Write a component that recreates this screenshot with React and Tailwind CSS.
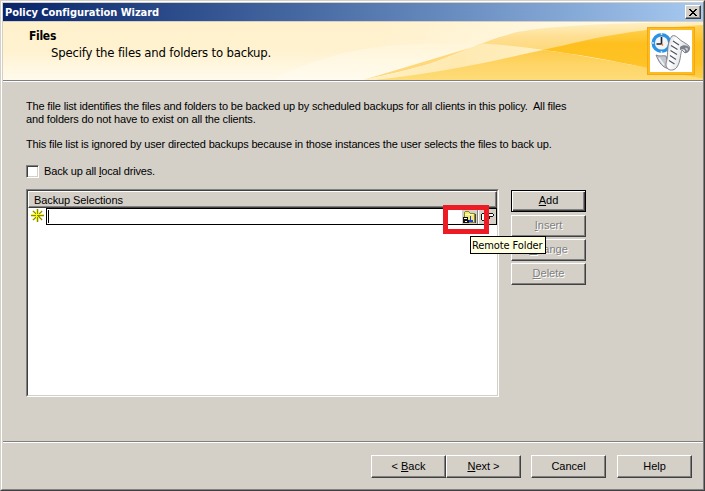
import clsx from 'clsx'

const uiFont = "font-['Liberation_Sans',Arial,sans-serif] tracking-[-0.16px]"
const tahoma = "font-['DejaVu_Sans_Condensed','DejaVu_Sans',sans-serif] [font-stretch:condensed]"

function Button({ children, className, disabled, isDefault }) {
  return (
    <button
      disabled={disabled}
      className={clsx(
        'flex items-center justify-center w-[75px] bg-[#d4d0c8] border text-[11px] leading-[13px] tracking-normal whitespace-pre',
        isDefault ? 'border-black' : 'border-t-white border-l-white border-r-[#404040] border-b-[#404040]',
        isDefault
          ? 'shadow-[inset_1px_1px_0_#fff,inset_-1px_-1px_0_#404040,inset_-2px_-2px_0_#808080]'
          : 'shadow-[inset_-1px_-1px_0_#808080]',
        disabled ? 'text-[#808080] [text-shadow:1px_1px_0_#fff]' : 'text-black',
        className
      )}
    >
      {children}
    </button>
  )
}

function Banner() {
  return (
    <svg className="absolute inset-0" width="700" height="58" viewBox="3 22 700 58">
      <defs>
        <linearGradient id="cream" x1="0" y1="0" x2="0" y2="1">
          <stop offset="0" stopColor="#fff1cc" />
          <stop offset="0.5" stopColor="#fff2d0" />
          <stop offset="1" stopColor="#fffaec" />
        </linearGradient>
        <linearGradient id="topFade" gradientUnits="userSpaceOnUse" x1="380" y1="0" x2="620" y2="0">
          <stop offset="0" stopColor="#fff8e2" stopOpacity="0" />
          <stop offset="1" stopColor="#fffae8" />
        </linearGradient>
        <linearGradient id="pale" gradientUnits="userSpaceOnUse" x1="300" y1="44" x2="300" y2="80">
          <stop offset="0" stopColor="#fff5d9" />
          <stop offset="1" stopColor="#fffbee" />
        </linearGradient>
        <linearGradient id="mid" gradientUnits="userSpaceOnUse" x1="0" y1="22" x2="0" y2="50">
          <stop offset="0" stopColor="#fff0c4" />
          <stop offset="0.5" stopColor="#fee095" />
          <stop offset="1" stopColor="#fed87a" />
        </linearGradient>
        <linearGradient id="swath" gradientUnits="userSpaceOnUse" x1="370" y1="0" x2="543" y2="0">
          <stop offset="0" stopColor="#fff0c4" />
          <stop offset="0.5" stopColor="#fee9b0" />
          <stop offset="1" stopColor="#ffefc2" />
        </linearGradient>
        <linearGradient id="deep" gradientUnits="userSpaceOnUse" x1="0" y1="50" x2="0" y2="80">
          <stop offset="0" stopColor="#fecb4a" />
          <stop offset="0.5" stopColor="#fed567" />
          <stop offset="1" stopColor="#fedc79" />
        </linearGradient>
        <linearGradient id="bright" gradientUnits="userSpaceOnUse" x1="0" y1="24" x2="0" y2="80">
          <stop offset="0" stopColor="#ffd560" />
          <stop offset="0.35" stopColor="#fdc01e" />
          <stop offset="0.7" stopColor="#fec225" />
          <stop offset="1" stopColor="#fed050" />
        </linearGradient>
      </defs>
      <rect x="3" y="22" width="700" height="58" fill="url(#cream)" />
      <rect x="380" y="22" width="323" height="58" fill="url(#topFade)" />
      <path d="M270 80C300 66 320 59 340 54C375 46 400 44 440 44L483 44L470 80Z" fill="url(#pale)" />
      <path d="M363 80C400 72 425 66 440 60C460 52 470 48 483 43C495 38 500 37 513 33C535 28 580 23 703 22V60L543 50L483 44Z" fill="url(#mid)" />
      <path d="M363 80C400 72 425 66 440 60C460 52 470 48 483 43.500C505 45 525 47 543 50L457 70L383 80Z" fill="url(#swath)" />
      <path d="M375 80C410 76 435 72 457 68C490 62 515 56 543 50C580 55 620 62 703 79V80Z" fill="url(#deep)" />
      <path d="M543 50C565 45 590 39 607 36C640 30 670 27 703 25V79C684 75 664 72 647 68C610 60 575 54 543 50Z" fill="url(#bright)" />
    </svg>
  )
}

function PolicyIcon() {
  return (
    <div className="relative flex items-center justify-center w-12 h-12 mr-2 bg-white border-[3px] border-[#fdbb20] outline outline-1 -outline-offset-1 outline-[#f4a914]">
      <svg className="shrink-0" width="42" height="42" viewBox="0 0 42 42">
        <defs>
          <linearGradient id="paper" x1="0" y1="0" x2="1" y2="0.4">
            <stop offset="0" stopColor="#c9ccd2" />
            <stop offset="0.4" stopColor="#ffffff" />
            <stop offset="1" stopColor="#d3d6dc" />
          </linearGradient>
        </defs>
        <circle cx="11.500" cy="13" r="8.300" fill="#f1f4f8" stroke="#2b93e4" strokeWidth="3.400" />
        <path d="M11.500 3V5M2 13H4M11.500 21V23M19 13H21" stroke="#cfe6fa" strokeWidth="1.500" />
        <path d="M11.500 7V14H6.500" fill="none" stroke="#222" strokeWidth="1.600" />
        <path d="M11.500 14L13 15.500" stroke="#f08030" strokeWidth="1.500" />
        <path d="M6 25C10 27 13 25 16 26L20 39C12 38 9 32 6 25Z" fill="#c3c6cc" stroke="#777b84" strokeWidth="0.900" />
        <path d="M9 28L14 35" stroke="#f1f2f4" strokeWidth="1.500" />
        <path d="M22 6C24 5 26 6 28 8C32 12 36 13 39 16C41 19 38 22 35 23L32 20C30 24 31 31 27 37C25 40 21 41 18 39C15 36 16 33 17 29C18 21 17 12 22 6Z" fill="url(#paper)" stroke="#777b84" strokeWidth="0.900" />
        <path d="M30 17C33 14 38 15 39.500 18C40 22 37 23 35 23C36 20 34 18 30 20Z" fill="#7b8089" />
        <path d="M35 18C37 17 39 19 37 21Z" fill="#d0d3d9" />
        <path d="M23 11L29 15M21 15.500L27.500 19.500M20.500 20.500L27 24.500M20 25.500L26 29.500M19 30.500L24.500 34" stroke="#4d525c" strokeWidth="1.100" />
      </svg>
    </div>
  )
}

function FolderIcon() {
  return (
    <svg width="15" height="15" viewBox="0 0 15 15" shapeRendering="crispEdges">
      <path d="M3 2H7V3H8V4H13V14H2V3H3Z" fill="#8b8630" />
      <path d="M3 3H7V4H8V5H12V13H3Z" fill="#f3ea70" />
      <path d="M3 5H11V6H3Z" fill="#fffcc4" />
      <path d="M13 5H14V14H13Z" fill="#404040" />
      <path d="M1 8H6V11H7V14H1Z" fill="#111" />
      <path d="M2 9H5V10H2ZM3 12H5V13H3Z" fill="#fff" />
      <path d="M8 7H9V11H11V13H7V11H8Z" fill="#1c39e4" />
    </svg>
  )
}

function HandIcon() {
  return (
    <svg width="16" height="15" viewBox="0 0 16 15" shapeRendering="crispEdges">
      <path d="M3 5H7V4H9V5H14V7H10V10H9V11H3Z" fill="#fff" />
      <path d="M2 5H3V11H2ZM3 4H6V5H3ZM6 3H9V4H6ZM9 4H14V5H9ZM14 5H15V7H14ZM9 7H14V8H9ZM7 6H9V7H7ZM10 8H11V10H10ZM7 9H10V10H7ZM3 11H9V12H3ZM9 10H10V11H9Z" fill="#111" />
    </svg>
  )
}

export default function App() {
  return (
    <div className={clsx('relative flex flex-col w-[705px] h-[491px] bg-[#d4d0c8] text-black overflow-hidden cursor-default border border-t-[#d4d0c8] border-l-[#d4d0c8] border-r-[#404040] border-b-[#404040]', uiFont)}>
      <div className="flex flex-col grow border border-t-white border-l-white border-r-[#808080] border-b-[#808080] pt-px pl-px">
        {/* Title bar */}
        <div className="flex items-center justify-between h-[18px] pl-[2px] pr-[2px] bg-linear-to-r from-[#0a246a] to-[#a6caf0]">
          <h1 className={clsx('pt-px text-[11px] leading-[17px] tracking-[-0.04px] font-bold text-white whitespace-pre', tahoma)}>Policy Configuration Wizard</h1>
          <button className="flex items-center justify-center w-4 h-[14px] bg-[#d4d0c8] border border-t-white border-l-white border-r-[#404040] border-b-[#404040] shadow-[inset_-1px_-1px_0_#808080]">
            <svg width="8" height="7" viewBox="0 0 8 7" shapeRendering="crispEdges">
              <path d="M0 0h2v1h1v1h2v-1h1v-1h2v1h-1v1h-1v1h-1v1h1v1h1v1h1v1h-2v-1h-1v-1h-2v1h-1v1h-2v-1h1v-1h1v-1h1v-1h-1v-1h-1v-1h-1z" />
            </svg>
          </button>
        </div>

        {/* Header */}
        <div className="relative h-[60px] mt-px border-b border-white">
          <Banner />
          <div className="relative flex justify-between h-[59px] border-b border-[#808080] pt-[5px]">
            <div className={clsx('pl-[26px] pt-px whitespace-pre', tahoma)}>
              <h2 className="text-[12px] leading-[17px] font-bold tracking-[-0.3px]">Files</h2>
              <p className="pl-[22px] text-[13px] leading-4 tracking-[-0.19px]">Specify the files and folders to backup.</p>
            </div>
            <PolicyIcon />
          </div>
        </div>

        {/* Content */}
        <div className="flex flex-col grow pl-[23px] pt-[18px] text-[11px] leading-[13px] whitespace-pre">
          <p>The file list identifies the files and folders to be backed up by scheduled backups for all clients in this policy.  All files</p>
          <p>and folders do not have to exist on all the clients.</p>
          <p className="mt-3">This file list is ignored by user directed backups because in those instances the user selects the files to back up.</p>
          <label className="flex items-center gap-[5px] mt-[14px]">
            <span className="w-[13px] h-[13px] bg-white border border-t-[#808080] border-l-[#808080] border-r-white border-b-white shadow-[inset_1px_1px_0_#404040,inset_-1px_-1px_0_#d4d0c8]" />
            <span>Back up all <u>l</u>ocal drives.</span>
          </label>

          <div className="flex gap-3 mt-[11px]">
            {/* Selection list */}
            <div className="w-[473px] h-[208px] bg-white border border-t-[#808080] border-l-[#808080] border-r-white border-b-white">
              <div className="h-full border border-t-[#404040] border-l-[#404040] border-r-[#d4d0c8] border-b-[#d4d0c8]">
                <div className="h-[17px] pl-[5px] bg-[#d4d0c8] border border-t-white border-l-white border-r-[#404040] border-b-[#404040] shadow-[inset_-1px_-1px_0_#808080]">
                  <span className="leading-[17px] tracking-[-0.1px]">Backup Selections</span>
                </div>
                <div className="flex h-[17px]">
                  <svg className="mx-[2px]" width="14" height="16" viewBox="0 0 14 16">
                    <path d="M7.500 1V14M1 7.500H14M3 3L12 12M12 3L3 12" stroke="#8a8a00" strokeWidth="1.500" />
                    <path d="M6.500 2V13M1 6.500H13M2.500 3.500L11 12M11 3L3 11" stroke="#ffff00" strokeWidth="0.900" />
                  </svg>
                  <div className="flex items-center grow border border-black pl-px">
                    <span className="w-px h-[13px] bg-black" />
                    <span className="grow" />
                    <span className="flex h-[15px] w-[16px] bg-[#d4d0c8] border-r border-[#808080]"><FolderIcon /></span>
                    <span className="flex h-[15px] w-[17px] ml-px bg-[#d4d0c8]"><HandIcon /></span>
                  </div>
                </div>
              </div>
            </div>
            {/* List actions */}
            <div className="flex flex-col gap-[2px] pt-px">
              <Button className="h-[22px] mb-px pb-[2px]" isDefault><u>A</u>dd</Button>
              <Button className="h-[22px] pb-px" disabled><u>I</u>nsert</Button>
              <Button className="h-[22px] pb-px" disabled><u>C</u>hange</Button>
              <Button className="h-[22px] pb-px" disabled><u>D</u>elete</Button>
            </div>
          </div>
        </div>

        {/* Footer */}
        <div className="h-[48px] border-t border-[#808080]">
          <div className="flex h-full border-t border-white pt-[12px] pl-[368px]">
            <Button className="h-[23px]">&lt; <u>B</u>ack</Button>
            <Button className="h-[23px]"><u>N</u>ext &gt;</Button>
            <Button className="h-[23px] ml-[10px]">Cancel</Button>
            <Button className="h-[23px] ml-[11px]">Help</Button>
          </div>
        </div>
      </div>

      {/* Highlight and tooltip */}
      <div className="absolute left-[442px] top-[204px] w-[46px] h-[29px] border-[5px] border-[#ed1c24]" />
      <div className={clsx('absolute left-[469px] top-[235px] w-[76px] h-[18px] pl-px bg-[#ffffe1] border border-black text-[11px] leading-[17px] tracking-[-0.1px] whitespace-pre', tahoma)}>Remote Folder</div>
    </div>
  )
}
